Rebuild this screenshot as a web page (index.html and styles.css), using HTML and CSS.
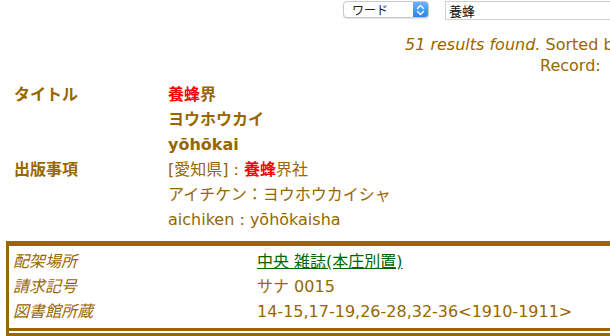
FILE: index.html
```html
<!DOCTYPE html>
<html lang="ja">
<head>
  <meta charset="UTF-8">
  <title>検索結果 - 養蜂界</title>
  <link rel="stylesheet" href="styles.css">
</head>
<body>
  <div class="page">
    <div class="search">
      <div class="select">
        <span class="select-label">ワード</span>
        <span class="stepper">
          <svg width="9" height="12" viewBox="0 0 9 12"><path d="M1.5 4.5 L4.5 1.5 L7.5 4.5 M1.5 7.5 L4.5 10.5 L7.5 7.5" fill="none" stroke="#fff" stroke-width="1.4" stroke-linecap="round" stroke-linejoin="round"/></svg>
        </span>
      </div>
      <input class="query" type="text" value="養蜂">
    </div>

    <div class="summary">
      <p class="count"><em>51 results found.</em> Sorted by</p>
      <p class="record">Record:</p>
    </div>

    <div class="detail">
      <div class="label">タイトル</div>
      <div class="value strong"><span class="hit">養蜂</span>界</div>
      <div class="label"></div>
      <div class="value strong">ヨウホウカイ</div>
      <div class="label"></div>
      <div class="value strong">yōhōkai</div>
      <div class="label">出版事項</div>
      <div class="value">[愛知県] : <span class="hit">養蜂</span>界社</div>
      <div class="label"></div>
      <div class="value">アイチケン：ヨウホウカイシャ</div>
      <div class="label"></div>
      <div class="value">aichiken : yōhōkaisha</div>
    </div>

    <div class="holdings">
      <div class="holdings-grid">
        <div class="h-label">配架場所</div>
        <div class="h-value"><a href="#">中央 雑誌(本庄別置)</a></div>
        <div class="h-label">請求記号</div>
        <div class="h-value">サナ 0015</div>
        <div class="h-label">図書館所蔵</div>
        <div class="h-value">14-15,17-19,26-28,32-36&lt;1910-1911&gt;</div>
      </div>
    </div>
  </div>
</body>
</html>
```

FILE: styles.css
```css
body {
  margin: 0;
  overflow: hidden;
  font-family: 'DejaVu Sans', 'Noto Sans CJK JP', sans-serif;
  font-size: 16px;
  color: #996600;
  background: #fff;
}
.page {
  width: 760px;
}
.search {
  display: flex;
  align-items: flex-start;
  padding: 1px 0 0 343px;
  gap: 16px;
}
.select {
  display: flex;
  align-items: center;
  justify-content: space-between;
  width: 84px;
  height: 15px;
  border: 1px solid #c9c9c9;
  border-radius: 4px;
  box-shadow: 0 1px 1px rgba(0, 0, 0, 0.12);
  background: #fff;
  overflow: hidden;
}
.select-label {
  font-family: 'Noto Sans CJK JP', sans-serif;
  font-size: 12px;
  color: #222;
  padding-left: 8px;
  line-height: 15px;
}
.stepper {
  display: flex;
  align-items: center;
  justify-content: center;
  width: 15px;
  height: 15px;
  background: linear-gradient(#6cb3fa, #2b82f4);
}
.query {
  width: 220px;
  height: 19px;
  box-sizing: border-box;
  margin: 0;
  padding: 0 3px;
  border: 1px solid #cfcfcf;
  font-family: 'Noto Sans CJK JP', sans-serif;
  font-size: 13px;
  color: #111;
}
.summary {
  padding-top: 14px;
}
.summary p {
  margin: 0;
  line-height: 21px;
}
.count {
  padding-left: 405px;
  white-space: nowrap;
}
.record {
  padding-left: 540px;
  white-space: nowrap;
}
.detail {
  display: grid;
  grid-template-columns: 154px auto;
  padding: 6px 0 0 14px;
  line-height: 25px;
}
.label {
  font-weight: bold;
}
.strong {
  font-weight: bold;
}
.hit {
  color: #ff0000;
  font-weight: bold;
}
.holdings {
  margin: 9px 0 0 6px;
  border-top: 5px solid #996600;
  border-left: 3px solid #996600;
  border-bottom: 3px solid #996600;
  padding-bottom: 2px;
}
.holdings-grid {
  display: grid;
  grid-template-columns: 244px auto;
  padding: 3px 0 4px 4px;
  border-bottom: 3px solid #996600;
  line-height: 25px;
}
.h-label {
  font-style: italic;
}
.h-value a {
  color: #006600;
}
```
